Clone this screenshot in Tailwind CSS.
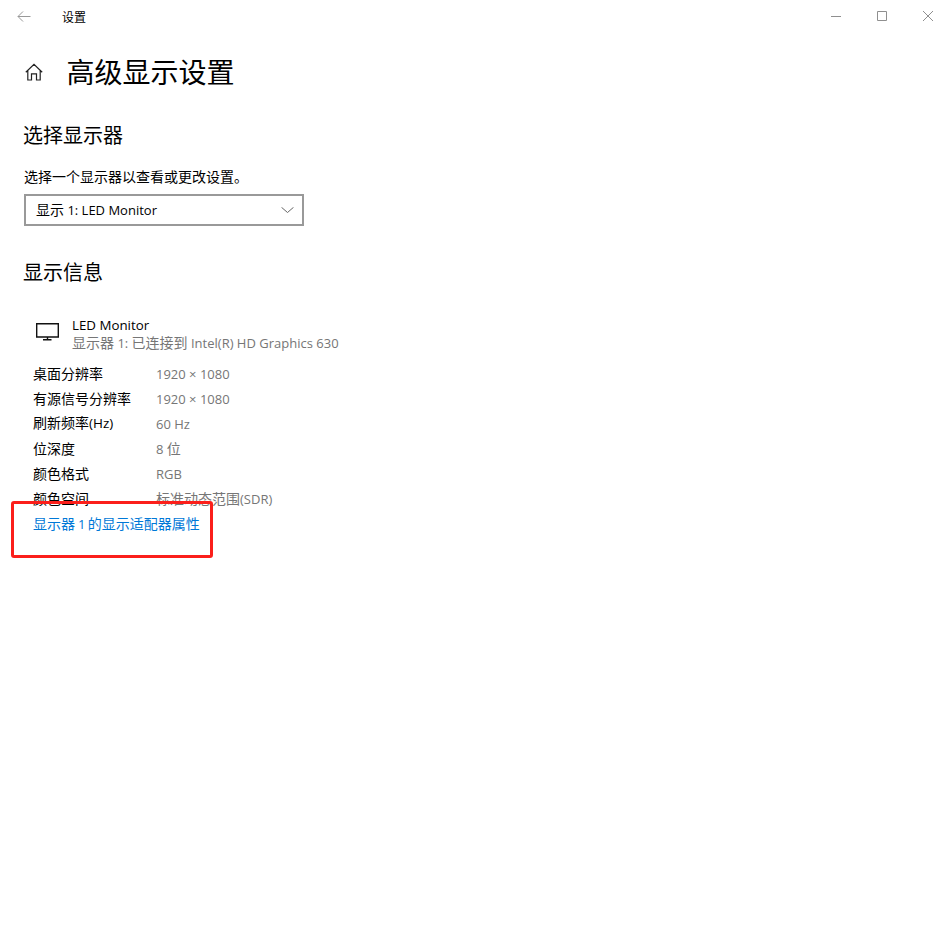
<!DOCTYPE html>
<html lang="zh-CN">
<head>
  <meta charset="UTF-8" />
  <script src="https://cdn.jsdelivr.net/npm/@tailwindcss/browser@4"></script>
  <title>设置</title>
</head>
<body class="bg-white min-h-screen font-['Open_Sans','Noto_Sans_CJK_SC',sans-serif] text-black relative overflow-hidden">
  <!-- title bar -->
  <div class="flex items-center h-8 pl-[17px]">
    <svg class="w-[15px] h-[15px] text-[#999]" viewBox="0 0 15 15" fill="none" stroke="currentColor" stroke-width="1"><path d="M1 7.5H13.5M6 2.5L1 7.5L6 12.5"/></svg>
    <span class="ml-[30px] mt-[4px] text-xs">设置</span>
    <div class="ml-auto flex items-center text-[#8f8f8f] pr-[18px] gap-[36px]">
      <svg class="w-[10px] h-[10px]" viewBox="0 0 10 10" stroke="currentColor" fill="none"><path d="M0 5.5H10"/></svg>
      <svg class="w-[10px] h-[10px]" viewBox="0 0 10 10" stroke="currentColor" fill="none"><path d="M.5.5H9.5V9.5H.5Z"/></svg>
      <svg class="w-[10px] h-[10px]" viewBox="0 0 10 10" stroke="currentColor" fill="none"><path d="M0 0L10 10M10 0L0 10"/></svg>
    </div>
  </div>

  <!-- page heading -->
  <div class="flex items-center mt-[19px] pl-[25px] h-[42px]">
    <svg class="w-[18px] h-[18px]" viewBox="0 0 18 18" fill="none" stroke="#222" stroke-width="1.2"><path d="M.8 9.2L9 1.4L17.2 9.2M2.8 7.4V17H6.5V10.8H11.5V17H15.2V7.4"/></svg>
    <h1 class="ml-[23.5px] text-[28px] leading-[42px] font-normal">高级显示设置</h1>
  </div>

  <div class="pl-6">
    <h2 class="mt-[29px] -ml-px text-xl leading-7 font-normal">选择显示器</h2>
    <p class="mt-[17px] text-sm leading-5">选择一个显示器以查看或更改设置。</p>
    <div class="mt-[7px] w-[280px] h-8 border-2 border-[#999] flex items-center justify-between pl-[10px] pr-[8px] text-sm">
      <span>显示<span class="text-[13px]"> 1: LED Monitor</span></span>
      <svg class="w-[13px] h-[6px] text-[#666]" viewBox="0 0 13 6" fill="none" stroke="currentColor"><path d="M.5.3L6.5 5.5L12.5.3"/></svg>
    </div>
    <h2 class="mt-[33px] -ml-px text-xl leading-7 font-normal">显示信息</h2>
  </div>

  <!-- monitor -->
  <div class="flex mt-[29px] pl-[36px]">
    <svg class="w-[23px] h-[18px] mt-[7px]" viewBox="0 0 23 18" fill="none" stroke="#111" stroke-width="1.4"><path d="M.7.7H22.3V14H.7ZM11.5 14V16.6M7 16.8H15.5"/></svg>
    <div class="ml-[13px] text-sm leading-[18px]">
      <div class="text-[13.3px]">LED Monitor</div>
      <div class="text-[#767676]">显示器<span class="text-[13px]"> 1: </span>已连接到<span class="text-[13px]"> Intel(R) HD Graphics 630</span></div>
    </div>
  </div>

  <!-- details -->
  <div class="mt-[9px] pl-[33px] grid grid-cols-[123px_1fr] auto-rows-[25px] items-center text-sm">
    <span>桌面分辨率</span><span class="text-[#767676] text-[13px] pt-px">1920 × 1080</span>
    <span>有源信号分辨率</span><span class="text-[#767676] text-[13px] pt-px">1920 × 1080</span>
    <span>刷新频率<span class="text-[13.5px]">(Hz)</span></span><span class="text-[#767676] text-[13px] pt-px">60 Hz</span>
    <span>位深度</span><span class="text-[#767676]"><span class="text-[13px]">8 </span>位</span>
    <span>颜色格式</span><span class="text-[#767676] text-[13px] pt-px">RGB</span>
    <span>颜色空间</span><span class="text-[#767676]">标准动态范围<span class="text-[13px]">(SDR)</span></span>
  </div>
  <a class="block pl-[33px] leading-[25px] text-sm text-[#0078d7]">显示器<span class="text-[13px] tracking-[-0.5px]"> 1 </span>的显示适配器属性</a>

  <!-- annotation -->
  <div class="absolute left-[11px] top-[501px] w-[202px] h-[57px] border-[3px] border-[#fb1f1b] rounded-[3px]"></div>
</body>
</html>
